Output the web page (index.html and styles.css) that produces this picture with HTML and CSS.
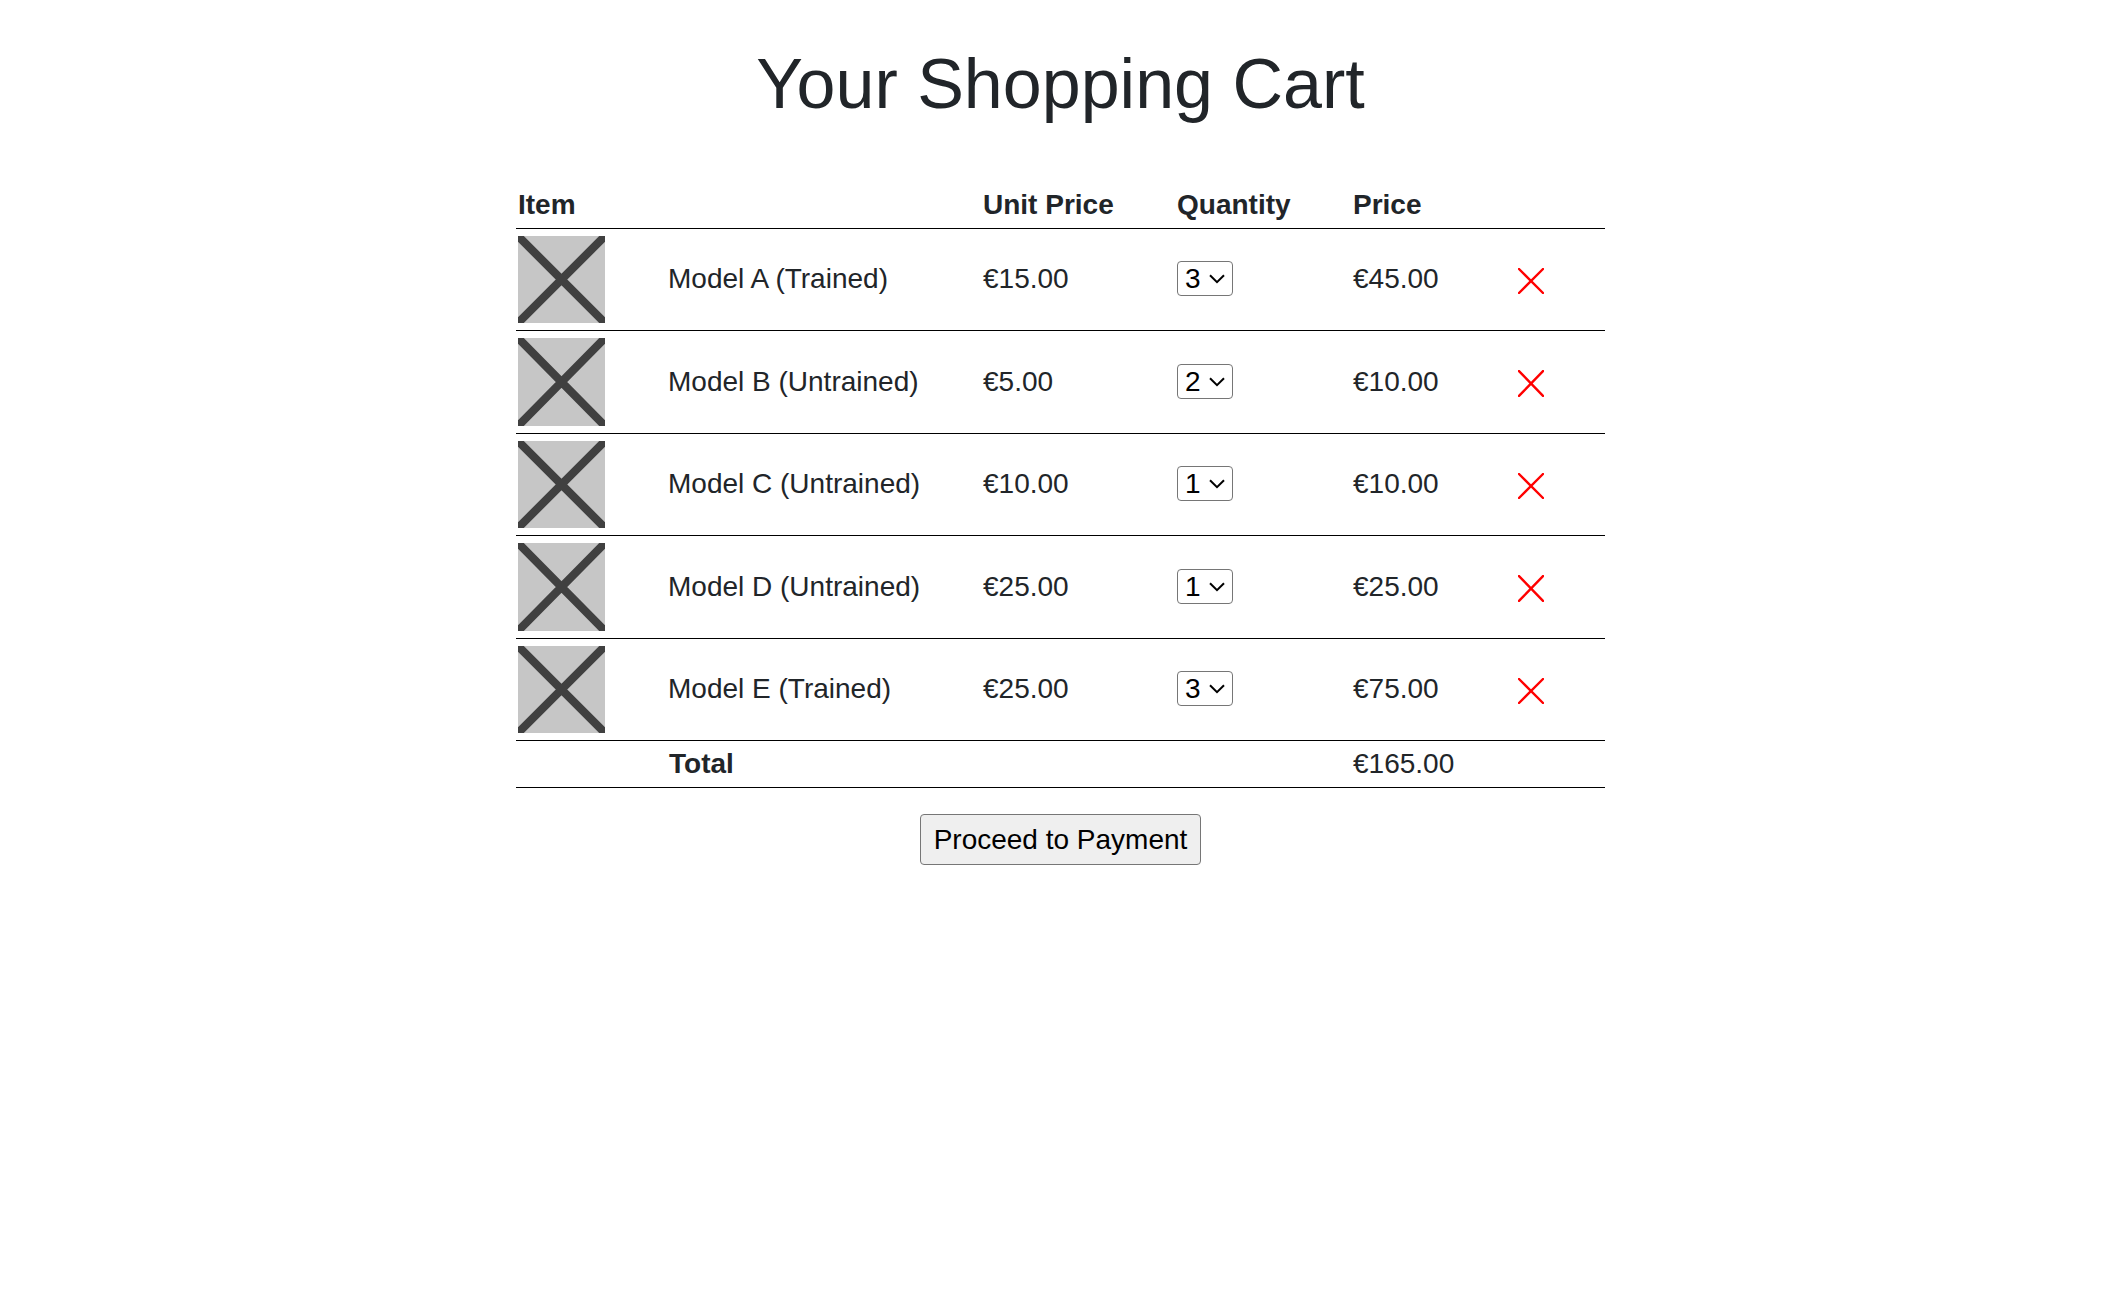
FILE: index.html
```html
<!DOCTYPE html>
<html lang="en">
<head>
<meta charset="utf-8">
<title>Your Shopping Cart</title>
<link rel="stylesheet" href="styles.css">
</head>
<body>
<svg class="defs" aria-hidden="true">
  <symbol id="placeholder" viewBox="0 0 87 87" preserveAspectRatio="none"><rect width="87" height="87" fill="#c6c6c6"/><path d="M-5 -5L92 92M92 -5L-5 92" stroke="#404040" stroke-width="8.2"/></symbol>
  <symbol id="chevron" viewBox="0 0 16 10"><path d="M1 1.2L8 8.2L15 1.2" fill="none" stroke="#000" stroke-width="2"/></symbol>
  <symbol id="cross" viewBox="0 0 26 26" preserveAspectRatio="none"><path d="M1 1L25 25M25 1L1 25" stroke="#f00" stroke-width="2.4" stroke-linecap="round"/></symbol>
</svg>
<main class="page">
  <h1 class="title">Your Shopping Cart</h1>
  <section class="cart">
    <div class="row head"><span>Item</span><span></span><span>Unit Price</span><span>Quantity</span><span>Price</span></div>
    <div class="row item">
      <svg class="thumb"><use href="#placeholder"/></svg><span>Model A (Trained)</span><span>€15.00</span>
      <span class="qty"><select><option>3</option></select><svg class="arrow"><use href="#chevron"/></svg></span>
      <span>€45.00</span><svg class="remove"><use href="#cross"/></svg>
    </div>
    <div class="row item tall">
      <svg class="thumb"><use href="#placeholder"/></svg><span>Model B (Untrained)</span><span>€5.00</span>
      <span class="qty"><select><option>2</option></select><svg class="arrow"><use href="#chevron"/></svg></span>
      <span>€10.00</span><svg class="remove"><use href="#cross"/></svg>
    </div>
    <div class="row item">
      <svg class="thumb"><use href="#placeholder"/></svg><span>Model C (Untrained)</span><span>€10.00</span>
      <span class="qty"><select><option>1</option></select><svg class="arrow"><use href="#chevron"/></svg></span>
      <span>€10.00</span><svg class="remove"><use href="#cross"/></svg>
    </div>
    <div class="row item tall">
      <svg class="thumb"><use href="#placeholder"/></svg><span>Model D (Untrained)</span><span>€25.00</span>
      <span class="qty"><select><option>1</option></select><svg class="arrow"><use href="#chevron"/></svg></span>
      <span>€25.00</span><svg class="remove"><use href="#cross"/></svg>
    </div>
    <div class="row item">
      <svg class="thumb"><use href="#placeholder"/></svg><span>Model E (Trained)</span><span>€25.00</span>
      <span class="qty"><select><option>3</option></select><svg class="arrow"><use href="#chevron"/></svg></span>
      <span>€75.00</span><svg class="remove"><use href="#cross"/></svg>
    </div>
    <div class="row total"><span></span><strong>Total</strong><span></span><span></span><span>€165.00</span></div>
  </section>
  <button class="pay">Proceed to Payment</button>
</main>
</body>
</html>
```
FILE: styles.css
```css
* { box-sizing: border-box; }
body {
  margin: 0;
  background: #fff;
  color: #212529;
  font: 28px/42px "Liberation Sans", Arial, sans-serif;
}
.defs { display: none; }
.page {
  display: flex;
  flex-direction: column;
  align-items: center;
  padding-top: 42px;
}
.title { margin: 0; font-size: 70px; line-height: 84px; font-weight: 400; }
.cart { width: 1089px; margin-top: 56px; }
.row {
  display: grid;
  grid-template-columns: 150px 315px 194px 176px 165px 1fr;
  align-items: center;
  padding-left: 2px;
  border-bottom: 1px solid #000;
}
.head { height: 47px; font-weight: 700; }
.item { height: 102px; padding-bottom: 2px; }
.tall { height: 103px; padding-bottom: 1px; }
.thumb { display: block; width: 87px; height: 87px; margin-top: 2px; }
.tall .thumb { height: 88px; margin-top: 1px; }
.total { height: 47px; }
.total strong { padding-left: 1px; }
.qty { display: grid; width: 56px; height: 35px; align-items: center; }
.qty > * { grid-area: 1 / 1; }
.qty select {
  appearance: none;
  width: 56px;
  height: 35px;
  margin: 0;
  padding: 0 0 0 7px;
  border: 1px solid #767676;
  border-radius: 4px;
  background: #fff;
  color: #000;
  font: inherit;
  line-height: 33px;
}
.arrow { width: 16px; height: 10px; justify-self: end; margin-right: 8px; pointer-events: none; }
.remove { width: 26px; height: 26px; margin-top: 5px; }
.tall .remove { height: 27px; margin-top: 4px; }
.pay {
  width: 281px;
  height: 51px;
  margin-top: 26px;
  padding: 0;
  border: 1px solid #767676;
  border-radius: 4px;
  background: #efefef;
  color: #000;
  font: inherit;
}
```
